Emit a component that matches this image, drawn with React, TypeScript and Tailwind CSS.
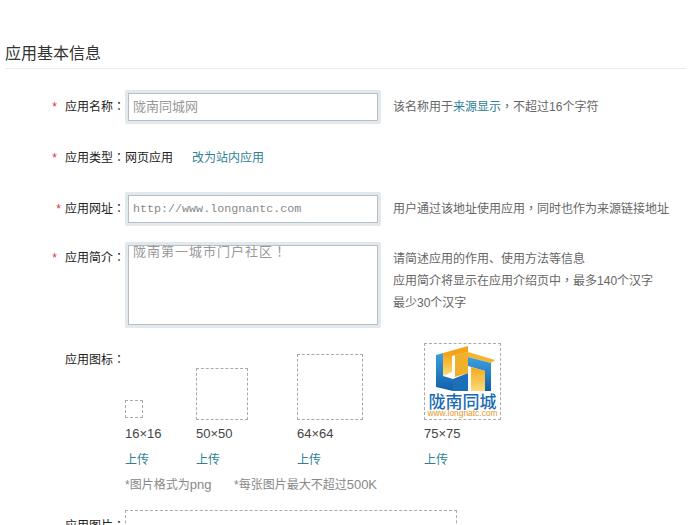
function P({ children }: { children: React.ReactNode }) {
  return <span className="leading-[0] font-['Noto_Sans_CJK_TC',sans-serif]">{children}</span>;
}
function Star({ className = "" }: { className?: string }) {
  return <span className={"text-[#d9343f] " + className}>*</span>;
}
function Label({ text, starGap = "mr-[8px]" }: { text: string; starGap?: string }) {
  return (
    <div className="w-[125px] shrink-0 flex justify-end items-center h-[14px] pr-[3px] text-[#222]">
      <Star className={starGap} />
      <span className="w-[57px] whitespace-nowrap">{text}<P>：</P></span>
    </div>
  );
}
function Field({ children }: { children: React.ReactNode }) {
  return (
    <div className="w-[256px] shrink-0 rounded-[2px] bg-[#e2e8ec] p-[3px]">
      <div className="bg-white border border-[#b4bfc6]">{children}</div>
    </div>
  );
}
function Logo() {
  return (
    <svg width="75" height="75" viewBox="0 0 75 75" className="block">
      <defs>
        <linearGradient id="b1" x1="0" y1="0" x2="0" y2="1">
          <stop offset="0" stopColor="#3fa0e0" />
          <stop offset="1" stopColor="#0f5fa8" />
        </linearGradient>
        <linearGradient id="o1" x1="0" y1="0" x2="0" y2="1">
          <stop offset="0" stopColor="#f5a81c" />
          <stop offset="1" stopColor="#fbdc7a" />
        </linearGradient>
      </defs>
      <path d="M11 11 L18 9 L18 32 L28 35 L28 47 L11 43 Z" fill="url(#b1)" />
      <path d="M18 13 L27 11 L27 28 L18 32 Z" fill="url(#o1)" />
      <path d="M28 35 L43 29 L43 47 L28 47 Z" fill="#1c6fb8" />
      <path d="M18 9 L43 2 L43 8 L27 12 L18 13 Z" fill="#f3a51a" />
      <path d="M30 11 L43 8 L43 29 L30 33 Z" fill="#f0b02a" />
      <path d="M43 8 L70 16 L66 19 L43 13 Z" fill="#f6b52e" />
      <path d="M43 13 L66 19 L66 47 L60 47 L60 27 L43 22 Z" fill="url(#b1)" />
      <path d="M46 23 L60 27 L60 47 L46 47 Z" fill="url(#o1)" />
      <text x="37.5" y="64" textAnchor="middle" fontSize="17" fontWeight="500" fill="#1c6cb4" fontFamily="'Noto Sans CJK SC', sans-serif">陇南同城</text>
      <text x="37.5" y="72" textAnchor="middle" fontSize="9" textLength="70" lengthAdjust="spacingAndGlyphs" fill="#e8961e" fontFamily="'Liberation Sans', sans-serif">www.longnatc.com</text>
    </svg>
  );
}
function IconCol({ width, size, dim, children, mb = "" }: { width: string; size: string; dim: string; children?: React.ReactNode; mb?: string }) {
  return (
    <div className={width + " shrink-0"}>
      <div className="h-[77px] flex items-end">
        <div className={size + " " + mb + " border border-dashed border-[#aaa] box-border"}>{children}</div>
      </div>
      <div className="mt-[7px] h-[14px] leading-[14px] text-[13px] text-[#444]">{dim}</div>
      <a className="block mt-[12px] h-[14px] leading-[14px] text-[#2f7f96]">上传</a>
    </div>
  );
}
export default function App() {
  return (
    <div className="w-[695px] h-[525px] overflow-hidden bg-white text-[12px] leading-[14px] font-['Liberation_Sans','Noto_Sans_CJK_SC',sans-serif]">
      <div className="ml-[5px] mr-[9px] pt-[44px] h-[69px] border-b border-[#ececec]">
        <h1 className="text-[16px] leading-[20px] text-[#333] font-normal">应用基本信息</h1>
      </div>
      <div className="mt-[22px] flex items-center h-[32px]">
        <Label text="应用名称" />
        <Field>
          <div className="h-[26px] leading-[25px] pl-[4px] text-[13px] text-[#999]">陇南同城网</div>
        </Field>
        <div className="ml-[12px] text-[#666] whitespace-nowrap">
          该名称用于<a className="text-[#2f7f96]">来源显示</a><P>，</P>不超过16个字符
        </div>
      </div>
      <div className="mt-[28px] flex items-center h-[14px]">
        <Label text="应用类型" />
        <span className="text-[#222] w-[67px]">网页应用</span>
        <a className="text-[#2f7f96]">改为站内应用</a>
      </div>
      <div className="mt-[28px] flex items-center h-[32px]">
        <Label text="应用网址" starGap="mr-[4px]" />
        <Field>
          <div className="h-[26px] leading-[26px] pl-[4px] text-[11.7px] text-[#888] font-['Liberation_Mono',monospace]">http://www.longnantc.com</div>
        </Field>
        <div className="ml-[12px] text-[#666] whitespace-nowrap">用户通过该地址使用应用<P>，</P>同时也作为来源链接地址</div>
      </div>
      <div className="mt-[17px] flex items-start">
        <div className="pt-[9px]"><Label text="应用简介" /></div>
        <Field>
          <div className="h-[78px] pl-[4px] text-[13px] leading-[10px] pt-[1px] text-[#999] tracking-[1px]">陇南第一城市门户社区<P>！</P></div>
        </Field>
        <div className="ml-[12px] pt-[6px] text-[#666] leading-[22px] whitespace-nowrap">
          <div>请简述应用的作用、使用方法等信息</div>
          <div>应用简介将显示在应用介绍页中<P>，</P>最多140个汉字</div>
          <div>最少30个汉字</div>
        </div>
      </div>
      <div className="mt-[15px] flex items-start">
        <div className="pt-[10px]"><Label text="应用图标" starGap="invisible" /></div>
        <div>
          <div className="flex">
            <IconCol width="w-[71px]" size="w-[18px] h-[18px]" dim="16×16" mb="mb-[2px]" />
            <IconCol width="w-[101px]" size="w-[52px] h-[52px]" dim="50×50" />
            <IconCol width="w-[127px]" size="w-[66px] h-[66px]" dim="64×64" />
            <IconCol width="w-[77px]" size="w-[77px] h-[77px]" dim="75×75"><Logo /></IconCol>
          </div>
          <div className="mt-[11px] h-[14px] flex text-[#888] whitespace-nowrap">
            <span className="w-[109px]">*图片格式为<span className="text-[13px]">png</span></span>
            <span>*每张图片最大不超过<span className="text-[13px]">500K</span></span>
          </div>
        </div>
      </div>
      <div className="mt-[18px] flex items-start">
        <div className="pt-[9px]"><Label text="应用图片" starGap="invisible" /></div>
        <div className="w-[332px] h-[60px] border border-dashed border-[#aaa]" />
      </div>
    </div>
  );
}
